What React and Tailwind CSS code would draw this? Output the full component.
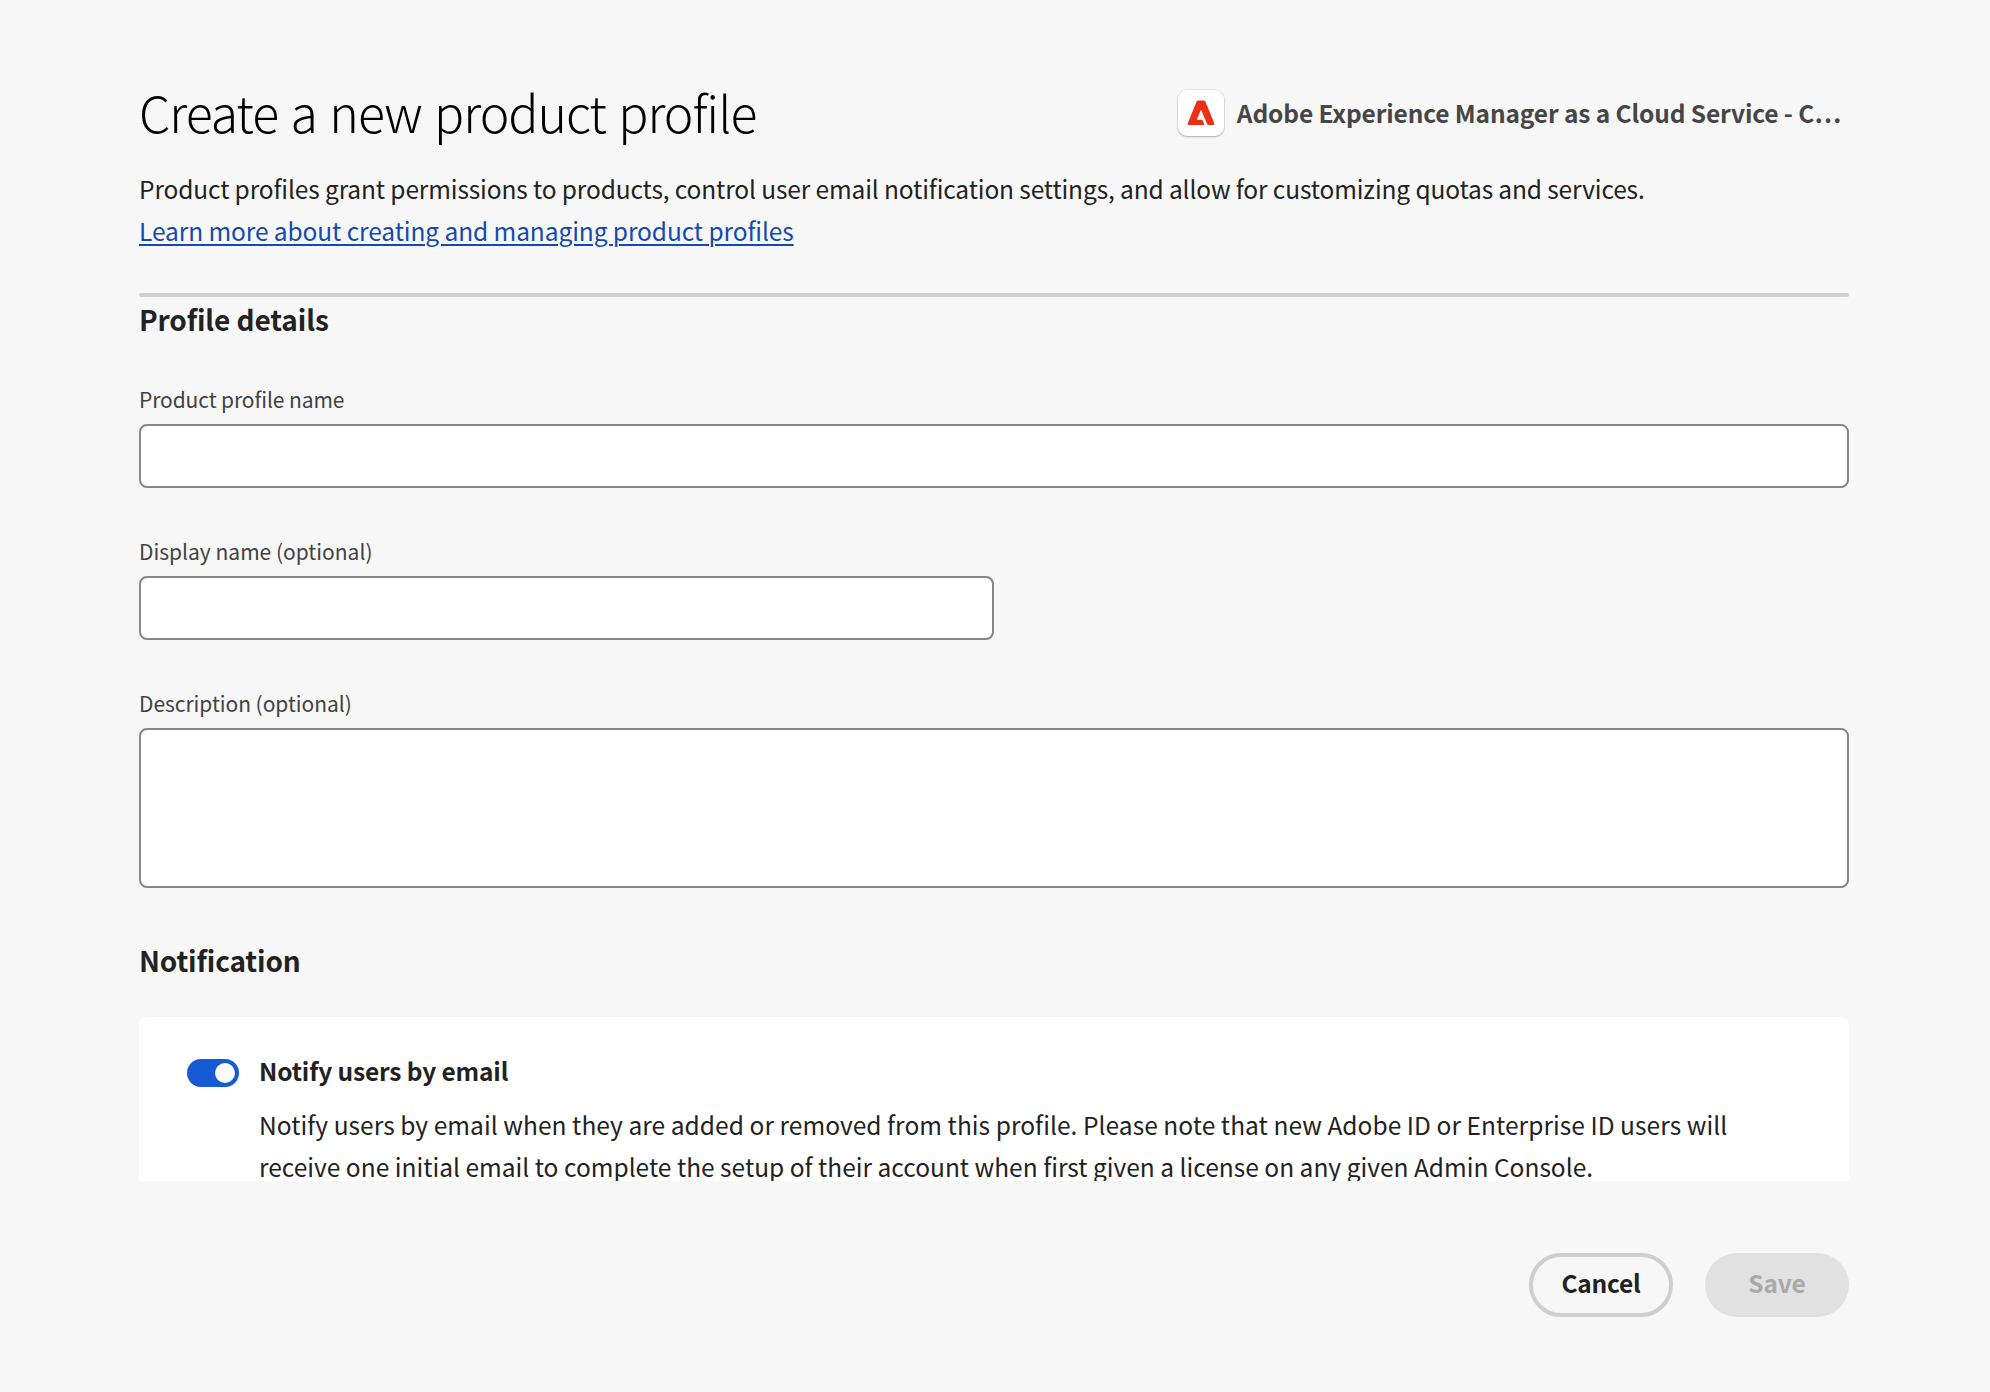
import React from "react";

function AdobeTile() {
  return (
    <span className="flex h-[46px] w-[46px] shrink-0 items-center justify-center rounded-[9px] bg-white shadow-[0_0_0_1px_rgba(0,0,0,0.06),0_1px_2px_rgba(0,0,0,0.25)]">
      <svg width="28" height="26" viewBox="0 0 28 26" fill="#eb3015" aria-hidden="true">
        <path d="M9.6 1.6Q10.2 0.4 11.5 0.4H16.5Q17.8 0.4 18.4 1.6L27.3 23.6Q27.7 25 26.3 25H21.6Q20.6 25 20.1 24L14.3 10.2Q14 9.6 13.7 10.2L10.1 18.9Q9.8 19.7 10.7 19.7H14.6Q15.4 19.7 15.7 20.4L17.3 24Q17.6 25 16.7 25H1.6Q0.3 25 0.7 23.6Z" />
      </svg>
    </span>
  );
}

function Field({ label, id, labelClass = "", children }) {
  return (
    <div className="mb-12 flex flex-col gap-2.5">
      <label htmlFor={id} className={"self-start text-[21px] leading-[30px] text-[#424242] " + labelClass}>
        {label}
      </label>
      {children}
    </div>
  );
}

export default function App() {
  return (
    <main className="h-[1392px] w-[1990px] overflow-hidden bg-[#f7f7f7] px-[139px] pt-[81px] font-['Noto_Sans_CJK_SC',sans-serif] text-[24.5px] text-[#222222]">
      <div className="w-[1710px]">
        <header>
          <div className="flex h-[60px] items-center justify-between">
            <h1 className="whitespace-nowrap text-[50px] font-light leading-[60px] tracking-[-1.05px] text-black [word-spacing:2.5px]">
              Create a new product profile
            </h1>
            <div className="mr-2 mt-[3px] flex items-center gap-[13px]">
              <AdobeTile />
              <span className="mt-[1px] whitespace-nowrap font-bold leading-9 tracking-[-0.13px] text-[#464646]">
                Adobe Experience Manager as a Cloud Service - C…
              </span>
            </div>
          </div>
          <p className="mt-[27px] whitespace-nowrap leading-[42px] tracking-[-0.125px]">
            Product profiles grant permissions to products, control user email notification settings, and allow for customizing quotas and services.
          </p>
          <p className="leading-[42px]">
            <a href="#learn" className="tracking-[-0.085px] text-[#144aaf] underline decoration-2 underline-offset-[3px]">
              Learn more about creating and managing product profiles
            </a>
          </p>
          <hr className="mt-[41px] h-1 rounded-sm border-0 bg-[#d0d0d0]" />
        </header>

        <section className="h-[884px] overflow-hidden">
          <h2 className="mb-[42px] text-[28px] font-bold leading-[45px] tracking-[-0.1px]">Profile details</h2>
          <Field label="Product profile name" id="name" labelClass="tracking-[-0.09px]">
            <input id="name" className="h-16 w-full rounded-lg border-2 border-[#868686] bg-white px-5" />
          </Field>
          <Field label="Display name (optional)" id="display">
            <input id="display" className="h-16 w-[855px] rounded-lg border-2 border-[#868686] bg-white px-5" />
          </Field>
          <Field label="Description (optional)" id="description" labelClass="tracking-[-0.04px]">
            <textarea id="description" className="block h-40 w-full resize-none rounded-lg border-2 border-[#868686] bg-white px-5 py-3" />
          </Field>

          <h2 className="mb-[35px] mt-[51px] text-[28px] font-bold leading-[43px] tracking-[-0.13px]">Notification</h2>
          <div className="flex items-start gap-5 rounded-lg bg-white px-12 pb-12 pt-9">
            <button
              role="switch"
              aria-checked="true"
              aria-label="Notify users by email"
              className="mt-1.5 flex h-7 w-[52px] shrink-0 items-center justify-end rounded-full bg-[#175bd4] p-1"
            >
              <span className="h-5 w-5 rounded-full bg-[#fdfdfd]" />
            </button>
            <div>
              <h3 className="font-bold leading-9 tracking-[-0.15px]">Notify users by email</h3>
              <p className="mt-[15px] whitespace-nowrap leading-[42px]">
                <span className="tracking-[0.055px]">
                  Notify users by email when they are added or removed from this profile. Please note that new Adobe ID or Enterprise ID users will
                </span>
                <br />
                <span className="tracking-[0.01px]">
                  receive one initial email to complete the setup of their account when first given a license on any given Admin Console.
                </span>
              </p>
            </div>
          </div>
        </section>

        <footer className="mt-[72px] flex justify-end gap-8">
          <button className="flex h-16 w-36 items-center justify-center rounded-full border-4 border-[#cecece] pb-1 font-bold tracking-[-0.2px]">
            Cancel
          </button>
          <button disabled className="flex h-16 w-36 items-center justify-center rounded-full bg-[#e1e1e1] pb-1 font-bold tracking-[-0.1px] text-[#a9a9a9]">
            Save
          </button>
        </footer>
      </div>
    </main>
  );
}
